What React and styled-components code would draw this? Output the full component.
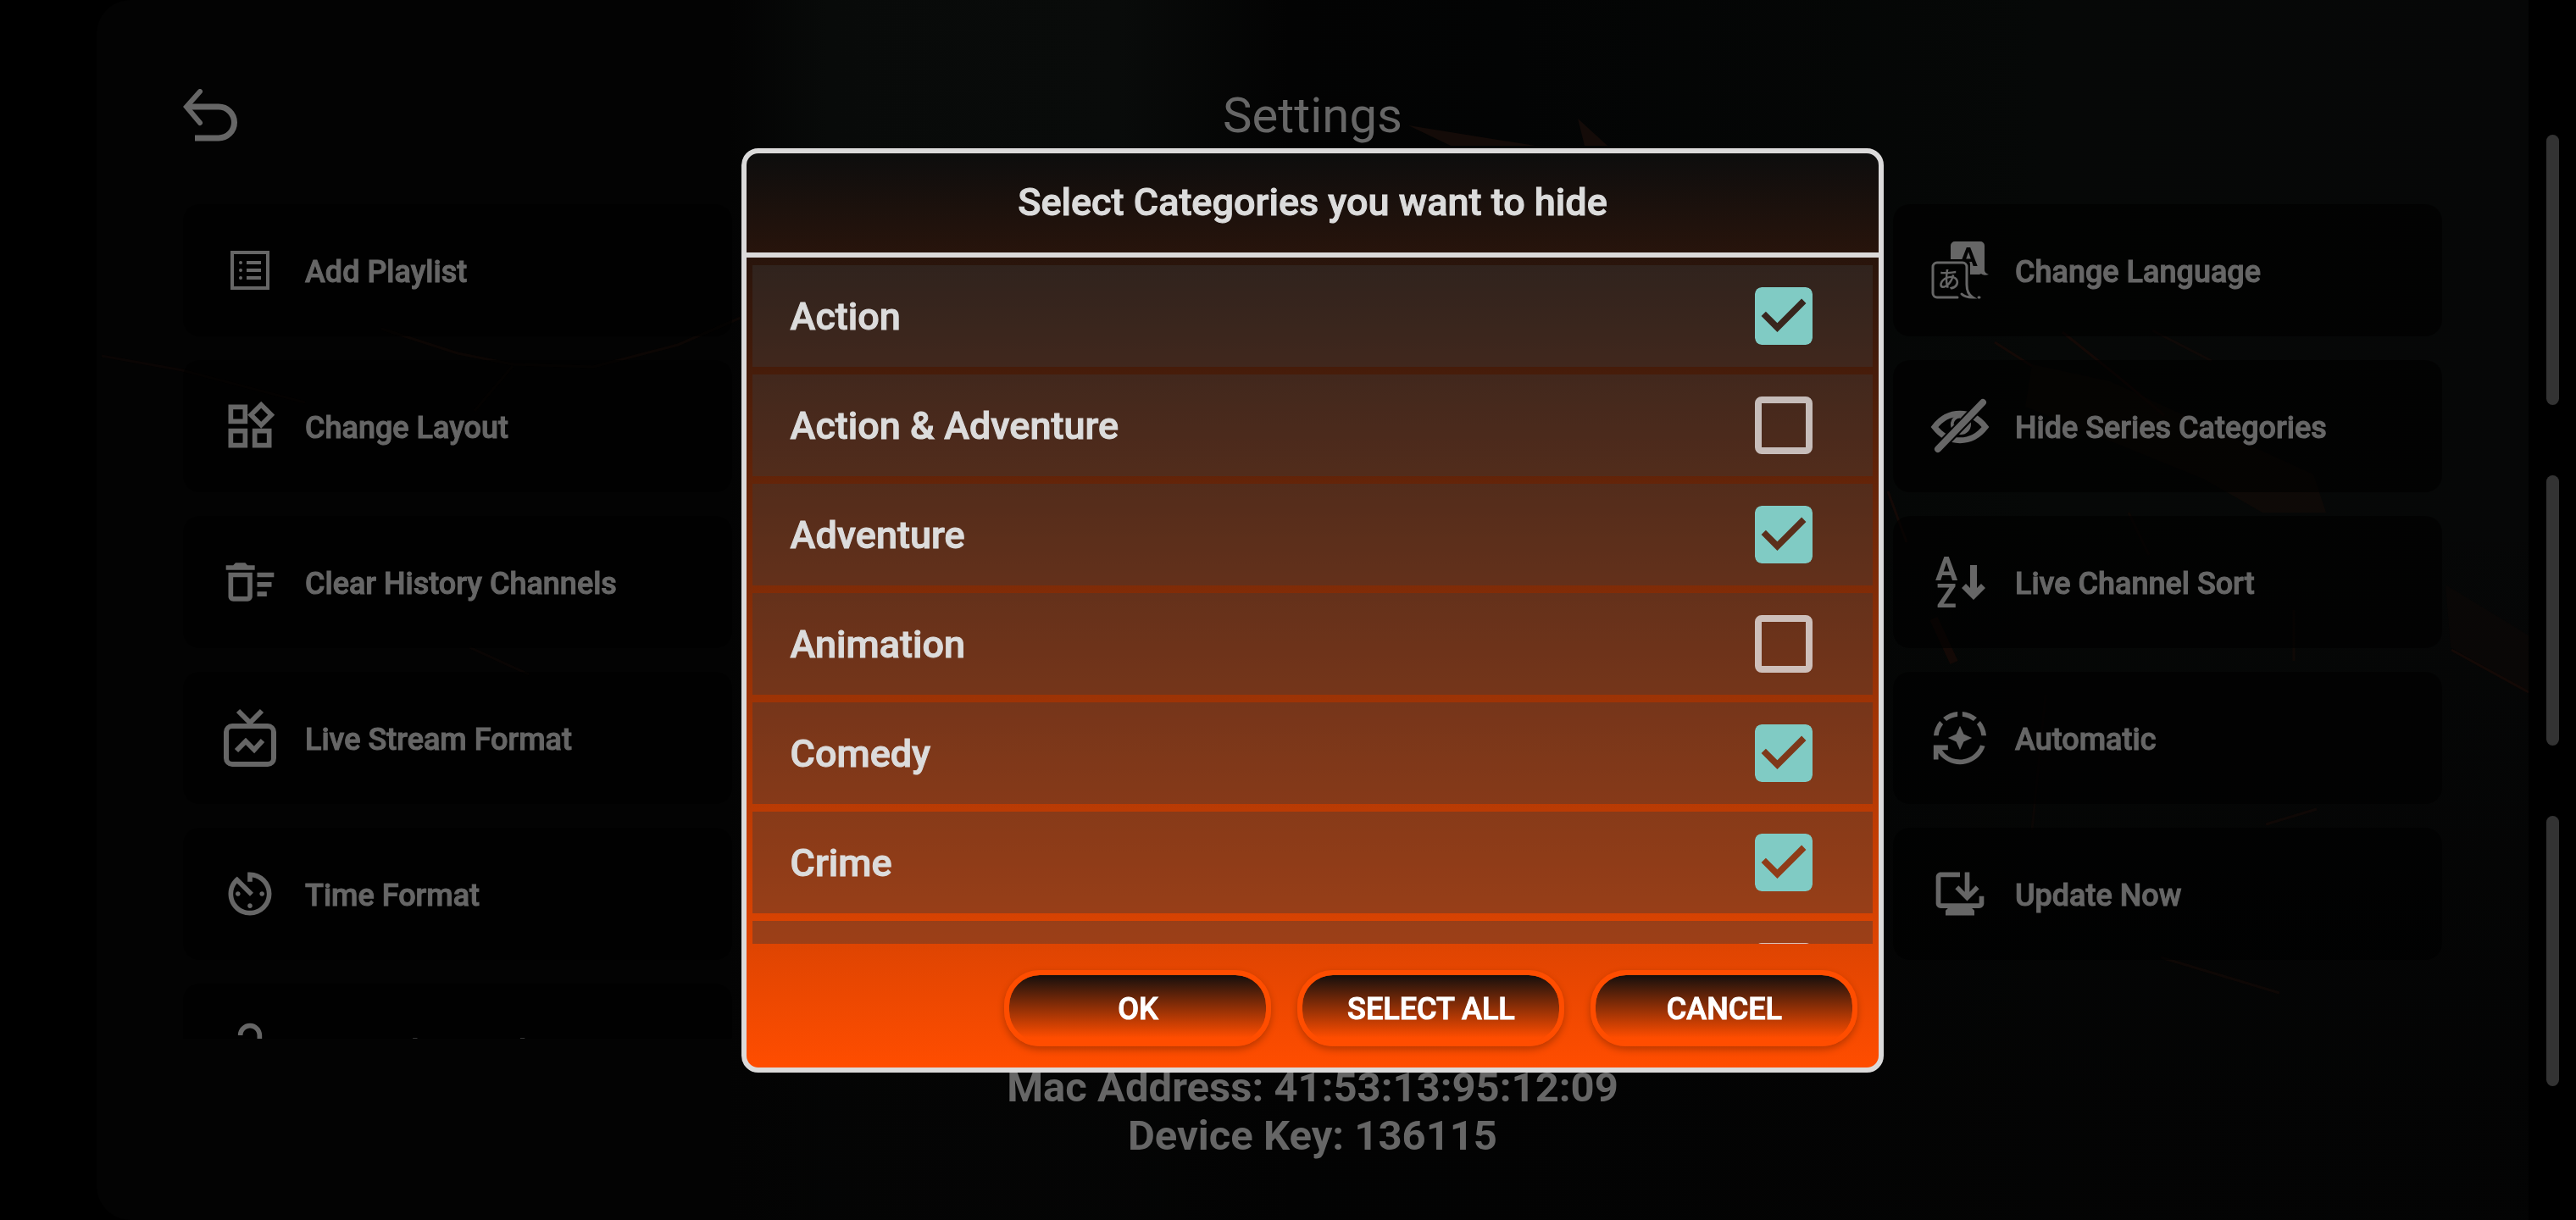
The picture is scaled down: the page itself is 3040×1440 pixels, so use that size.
import React, { useState } from "react";
import styled, { createGlobalStyle, css } from "styled-components";
import {
  MdOutlineWidgets,
  MdOutlineDeleteSweep,
  MdAvTimer,
  MdOutlineLockOpen,
  MdAutoMode,
  MdOutlineBrowserUpdated,
} from "react-icons/md";

const ListIcon = () => (
  <svg viewBox="0 0 68 68" aria-hidden="true">
    <rect x="13" y="13" width="42" height="42" fill="none" stroke="currentColor" strokeWidth="4" />
    <g fill="currentColor">
      <circle cx="23" cy="25" r="2" />
      <circle cx="23" cy="34" r="2" />
      <circle cx="23" cy="43" r="2" />
      <rect x="30" y="23" width="17" height="4" />
      <rect x="30" y="32" width="17" height="4" />
      <rect x="30" y="41" width="17" height="4" />
    </g>
  </svg>
);

const StreamIcon = () => (
  <svg viewBox="0 0 68 68" aria-hidden="true" fill="none" stroke="currentColor" strokeWidth="6">
    <rect x="6" y="20" width="56" height="45" rx="7" />
    <path d="M20 2l14 14L48 2" />
    <path d="M18 49l11-11 10 10 10-11" />
  </svg>
);

const LanguageIcon = () => (
  <svg viewBox="0 0 68 68" aria-hidden="true">
    <path
      d="M28 0h30a5 5 0 0 1 5 5v29c0 2 2 4 5 5-4 1-7 1-9-1l-2 1H46V27a6 6 0 0 0-6-6H23V5a5 5 0 0 1 5-5z"
      fill="currentColor"
    />
    <Glyph x="44" y="29" fontSize="32" fill="#030303">
      A
    </Glyph>
    <g fill="none" stroke="currentColor" strokeWidth="3" strokeLinecap="round">
      <path d="M31 66H7a5 5 0 0 1-5-5V30a5 5 0 0 1 5-5h30a5 5 0 0 1 5 5v21c0 7 2 12 7 15-6 0-10-1-13-4" />
      <path d="M56 66h1" />
    </g>
    <Kana x="21" y="55" fontSize="27" fill="currentColor">
      あ
    </Kana>
  </svg>
);

const HiddenIcon = () => (
  <svg viewBox="0 0 68 68" aria-hidden="true" fill="none" stroke="currentColor">
    <path d="M4 35C20 14 48 14 64 35C48 56 20 56 4 35z" strokeWidth="7" />
    <circle cx="35" cy="32" r="12" fill="currentColor" stroke="none" />
    <path d="M28 32a6 6 0 0 1 6-6" stroke="#030303" strokeWidth="3" />
    <path d="M8 61L61 6" stroke="#030303" strokeWidth="12" />
    <path d="M8 61L61 6" strokeWidth="8" strokeLinecap="round" />
  </svg>
);

const SortIcon = () => (
  <svg viewBox="0 0 68 68" aria-hidden="true">
    <Glyph x="18" y="32" fontSize="39" fill="currentColor">
      A
    </Glyph>
    <Glyph x="18" y="64" fontSize="39" fill="currentColor">
      Z
    </Glyph>
    <path d="M46 14h8v27l5-5 5 5-14 14-14-14 5-5 5 5z" fill="currentColor" />
  </svg>
);

const BackIcon = () => (
  <svg viewBox="0 0 64 62" aria-hidden="true" fill="none" stroke="currentColor">
    <path d="M4 21h38a18 18 0 0 1 0 37H14" strokeWidth="7" />
    <path d="M20 3L4 21l16 19" strokeWidth="6" strokeLinecap="round" />
  </svg>
);

const leftMenu = [
  { label: "Add Playlist", Icon: ListIcon },
  { label: "Change Layout", Icon: MdOutlineWidgets },
  { label: "Clear History Channels", Icon: MdOutlineDeleteSweep },
  { label: "Live Stream Format", Icon: StreamIcon },
  { label: "Time Format", Icon: MdAvTimer },
  { label: "Parental Control Setting", Icon: MdOutlineLockOpen },
];

const rightMenu = [
  { label: "Change Language", Icon: LanguageIcon },
  { label: "Hide Series Categories", Icon: HiddenIcon },
  { label: "Live Channel Sort", Icon: SortIcon },
  { label: "Automatic", Icon: MdAutoMode },
  { label: "Update Now", Icon: MdOutlineBrowserUpdated },
];

const categories = [
  { name: "Action", hidden: true },
  { name: "Action & Adventure", hidden: false },
  { name: "Adventure", hidden: true },
  { name: "Animation", hidden: false },
  { name: "Comedy", hidden: true },
  { name: "Crime", hidden: true },
  { name: "", hidden: false },
];

const Menu = ({ items }) => (
  <MenuColumn>
    {items.map(({ label, Icon }) => (
      <MenuCard key={label} type="button">
        <Icon />
        <MenuLabel>{label}</MenuLabel>
      </MenuCard>
    ))}
  </MenuColumn>
);

// low-poly wallpaper, almost lost under the dimmed screen
const Wallpaper = () => (
  <Backdrop viewBox="0 0 2870 1440" preserveAspectRatio="none" aria-hidden="true">
    <g fill="#140b08">
      <path d="M1548 148l150 24h-100z" />
      <path d="M1748 140l35 32h-27z" />
      <path d="M2284 430l92 20 240 110 15 45h-75l-70-40-210-85z" opacity="0.6" />
      <path d="M2772 690l98 60v66l-92-52z" opacity="0.3" />
    </g>
    <g fill="none" stroke="#180b07" strokeWidth="3" opacity="0.8">
      <path d="M336 388l90 29 65 13 95 3 100-26 74-32" opacity="0.6" />
      <path d="M491 432l-45 53" opacity="0.5" />
      <path d="M6 420l95 17 145 38" opacity="0.4" />
      <path d="M440 764l70 32" opacity="0.5" />
      <path d="M2320 392l60 48 60 50" />
      <path d="M2240 404l44 28" />
      <path d="M2426 390l70 36" opacity="0.7" />
      <path d="M2114 580l22 60" />
      <path d="M2398 605l24 50" opacity="0.6" />
      <path d="M2168 730l24 52" strokeWidth="10" />
      <path d="M2593 720v60" opacity="0.7" />
      <path d="M2779 767l91 50" />
      <path d="M2560 973l60-18" opacity="0.7" />
      <path d="M2436 1130l140 42" opacity="0.7" />
      <path d="M2300 820l-16 160" opacity="0.4" />
    </g>
  </Backdrop>
);

const App = () => {
  const [list, setList] = useState(categories);

  const toggle = (index) =>
    setList(list.map((c, i) => (i === index ? { ...c, hidden: !c.hidden } : c)));
  const selectAll = () => setList(list.map((c) => ({ ...c, hidden: true })));

  return (
    <Screen>
      <GlobalStyle />
      <Stage>
        <Wallpaper />
        <Header>
          <BackButton type="button" aria-label="Back">
            <BackIcon />
          </BackButton>
          <h1>Settings</h1>
        </Header>
        <MenuArea>
          <Menu items={leftMenu} />
          <Menu items={rightMenu} />
        </MenuArea>
        <DeviceInfo>
          <p>Mac Address: 41:53:13:95:12:09</p>
          <p>Device Key: 136115</p>
        </DeviceInfo>
        <Overlay>
          <Dialog role="dialog" aria-labelledby="dialog-title">
            <DialogTitle id="dialog-title">Select Categories you want to hide</DialogTitle>
            <CategoryList>
              {list.map((category, index) => (
                <CategoryRow key={index}>
                  <span>{category.name}</span>
                  <Checkbox
                    type="checkbox"
                    checked={category.hidden}
                    onChange={() => toggle(index)}
                  />
                </CategoryRow>
              ))}
            </CategoryList>
            <DialogActions>
              <DialogButton type="button">OK</DialogButton>
              <DialogButton type="button" onClick={selectAll}>
                SELECT ALL
              </DialogButton>
              <DialogButton type="button">CANCEL</DialogButton>
            </DialogActions>
          </Dialog>
        </Overlay>
      </Stage>
      <Rail>
        <RailBar />
        <RailBar />
        <RailBar />
      </Rail>
    </Screen>
  );
};

const GlobalStyle = createGlobalStyle`
  * {
    box-sizing: border-box;
  }
  body {
    margin: 0;
    background: #000;
    font-family: Roboto, "Noto Sans CJK JP", sans-serif;
  }
  h1, h2, p {
    margin: 0;
  }
  button {
    font-family: inherit;
    cursor: pointer;
  }
`;

// medium cut thickened by a thin stroke, so it keeps the medium widths
const thickened = css`
  font-weight: 500;
  -webkit-text-stroke: 1px currentColor;
`;

const Glyph = styled.text`
  font-family: Roboto, sans-serif;
  font-weight: 700;
  text-anchor: middle;
`;

const Kana = styled(Glyph)`
  font-family: "Noto Sans CJK JP", sans-serif;
  font-weight: 500;
`;

const Screen = styled.div`
  display: flex;
  height: 100vh;
  padding-left: 114px;
  overflow: hidden;
`;

const Stage = styled.main`
  position: relative;
  flex: 1;
  display: flex;
  flex-direction: column;
  border-radius: 40px 0 0 40px;
  overflow: hidden;
  color: #666;
  background: linear-gradient(rgba(3, 3, 3, 0) 40%, rgba(3, 3, 3, 0.8) 90%),
    linear-gradient(
      90deg,
      #030303 0%,
      #030303 26%,
      #080a09 30%,
      #090b0a 42%,
      #030303 49%,
      #030404 58%,
      #060807 80%,
      #060707 100%
    );
`;

const Backdrop = styled.svg`
  position: absolute;
  inset: 0;
  width: 100%;
  height: 100%;
`;

const Header = styled.header`
  position: relative;
  display: grid;
  grid-template-columns: 1fr auto 1fr;
  align-items: center;
  align-content: start;
  height: 241px;
  padding: 32px 102px 0;
  h1 {
    font-size: 58px;
    font-weight: 400;
    line-height: 208px;
  }
`;

const BackButton = styled.button`
  width: 64px;
  height: 62px;
  padding: 0;
  border: none;
  background: none;
  color: inherit;
  svg {
    display: block;
    width: 64px;
    height: 62px;
  }
`;

const MenuArea = styled.nav`
  position: relative;
  flex: 1;
  min-height: 0;
  display: flex;
  justify-content: space-between;
  padding: 0 102px;
  overflow: hidden;
`;

const MenuColumn = styled.div`
  width: 648px;
  display: flex;
  flex-direction: column;
  gap: 28px;
`;

const MenuCard = styled.button`
  flex: none;
  display: flex;
  align-items: center;
  gap: 31px;
  height: 156px;
  padding: 0 45px;
  border: none;
  border-radius: 20px;
  background: rgba(0, 0, 0, 0.6);
  color: #666;
  svg {
    flex: none;
    width: 68px;
    height: 68px;
    overflow: visible;
  }
`;

const MenuLabel = styled.span`
  ${thickened}
  padding-top: 4px;
  font-size: 36px;
`;

const DeviceInfo = styled.footer`
  position: relative;
  height: 214px;
  padding-top: 29px;
  text-align: center;
  font-size: 49px;
  font-weight: 700;
  line-height: 57px;
`;

const Overlay = styled.div`
  position: absolute;
  inset: 0;
  display: flex;
  align-items: center;
  justify-content: center;
`;

const Dialog = styled.section`
  width: 47%;
  border: 6px solid #dbdada;
  border-radius: 20px;
  overflow: hidden;
  background: linear-gradient(#0d0d0d, #ff4d00);
  color: #dcdcdc;
`;

const DialogTitle = styled.h2`
  ${thickened}
  height: 123px;
  border-bottom: 6px solid #dbdada;
  font-size: 45px;
  line-height: 116px;
  text-align: center;
`;

const CategoryList = styled.div`
  display: flex;
  flex-direction: column;
  gap: 9px;
  height: 810px;
  padding: 9px 7px 0;
  overflow: hidden;
`;

const CategoryRow = styled.label`
  ${thickened}
  flex: none;
  display: flex;
  align-items: center;
  justify-content: space-between;
  height: 120px;
  padding: 0 71px 0 45px;
  background: rgba(58, 57, 57, 0.4);
  font-size: 45px;
  span {
    padding-top: 2px;
  }
`;

const Checkbox = styled.input`
  appearance: none;
  width: 68px;
  height: 68px;
  margin: 0;
  border: 8px solid rgba(230, 226, 226, 0.8);
  border-radius: 8px;
  &:checked {
    border: none;
    background: #80cbc4;
    mask: url("data:image/svg+xml,%3Csvg xmlns='http://www.w3.org/2000/svg' viewBox='3 3 18 18'%3E%3Cpath fill-rule='evenodd' d='M3 3h18v18H3zM10 17l-5-5 1.41-1.41L10 14.17l7.59-7.59L19 8z'/%3E%3C/svg%3E")
      center / 100% 100%;
  }
`;

const DialogActions = styled.div`
  display: flex;
  justify-content: flex-end;
  gap: 31px;
  padding: 31px 25px 25px;
`;

const DialogButton = styled.button`
  ${thickened}
  width: 315px;
  height: 90px;
  padding: 2px 0 0;
  border: 6px solid #ff4d00;
  border-radius: 42px;
  background: linear-gradient(#150f0d, #ff4d00 95%) padding-box;
  box-shadow: 0 4px 8px rgba(0, 0, 0, 0.25);
  color: #fff;
  font-size: 36px;
`;

const Rail = styled.aside`
  width: 56px;
  display: flex;
  flex-direction: column;
  gap: 83px;
  padding: 159px 20px 158px 21px;
`;

const RailBar = styled.div`
  flex: 1;
  border-radius: 8px;
  background: #333;
`;

export default App;
